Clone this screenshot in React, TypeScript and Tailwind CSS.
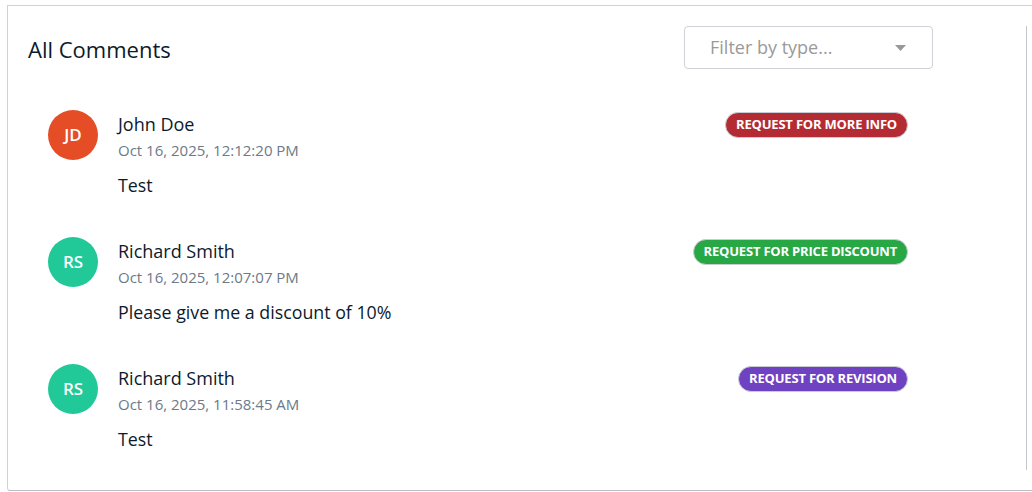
type Comment = {
  initials: string;
  name: string;
  date: string;
  text: string;
  tag: string;
  avatar: string;
  tagColor: string;
};

const comments: Comment[] = [
  {
    initials: "JD",
    name: "John Doe",
    date: "Oct 16, 2025, 12:12:20 PM",
    text: "Test",
    tag: "Request for more info",
    avatar: "bg-[#e44d26]",
    tagColor: "bg-[#b52b34]",
  },
  {
    initials: "RS",
    name: "Richard Smith",
    date: "Oct 16, 2025, 12:07:07 PM",
    text: "Please give me a discount of 10%",
    tag: "Request for price discount",
    avatar: "bg-[#20c997]",
    tagColor: "bg-[#28a745]",
  },
  {
    initials: "RS",
    name: "Richard Smith",
    date: "Oct 16, 2025, 11:58:45 AM",
    text: "Test",
    tag: "Request for revision",
    avatar: "bg-[#20c997]",
    tagColor: "bg-[#6f42c1]",
  },
];

function CommentRow({ c }: { c: Comment }) {
  return (
    <div className="flex items-start">
      <div
        className={`flex h-[50px] w-[50px] shrink-0 items-center justify-center rounded-full text-[17px] font-semibold text-white ${c.avatar}`}
      >
        {c.initials}
      </div>
      <div className="ml-[20px] flex-1 pt-[2px]">
        <p className="text-[18px] leading-[24px] text-[#0b1a2c]">{c.name}</p>
        <p className="mt-[4px] text-[15px] leading-[20px] text-[#6c7a89]">{c.date}</p>
        <p className="mt-[13px] text-[17.8px] leading-[24px] text-[#0b1a2c]">{c.text}</p>
      </div>
      <span
        className={`mr-[118px] mt-[2px] inline-flex h-[26px] items-center rounded-full border border-[#c9ccd3] px-[10px] text-[13px] font-bold uppercase tracking-[-0.015em] text-white ${c.tagColor}`}
      >
        {c.tag}
      </span>
    </div>
  );
}

export default function App() {
  return (
    <div
      className="h-[492px] overflow-hidden bg-white pl-[7px] pt-[5px]"
      style={{ fontFamily: '"Open Sans", sans-serif' }}
    >
      <div className="h-[486px] rounded-bl-[3px] border-b border-l border-t border-b-[#b9bdc5] border-l-[#d2d2d2] border-t-[#d2d2d2] pl-[20px] pt-[20px]">
        <div className="h-[444px] w-[999px] border-r border-[#c3c7ce]">
          <div className="flex items-center">
            <h2 className="pt-[4px] text-[22px] text-[#0b1a2c]">All Comments</h2>
            <button
              type="button"
              className="ml-auto mr-[93px] flex h-[43px] w-[249px] items-center rounded-[4px] border border-[#cfd2d6] bg-white pl-[25px] pr-[26px] text-left text-[18px] text-[#9a9a9a]"
            >
              <span className="flex-1">Filter by type...</span>
              <svg width="11" height="6" viewBox="0 0 11 6" className="text-[#999]">
                <path d="M0 0h11L5.5 6z" fill="currentColor" />
              </svg>
            </button>
          </div>
          <div className="ml-[20px] mt-[41px] flex flex-col gap-[40px]">
            {comments.map((c, i) => (
              <CommentRow key={i} c={c} />
            ))}
          </div>
        </div>
      </div>
    </div>
  );
}
